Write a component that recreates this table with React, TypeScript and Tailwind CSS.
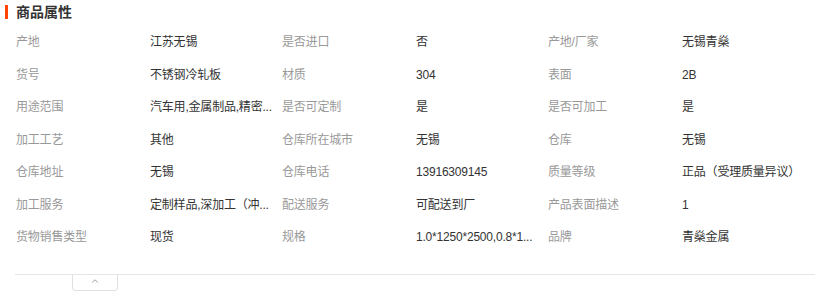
import { ChevronUp } from "lucide-react";

const attrs: [string, string][] = [
  ["产地", "江苏无锡"],
  ["是否进口", "否"],
  ["产地/厂家", "无锡青燊"],
  ["货号", "不锈钢冷轧板"],
  ["材质", "304"],
  ["表面", "2B"],
  ["用途范围", "汽车用,金属制品,精密..."],
  ["是否可定制", "是"],
  ["是否可加工", "是"],
  ["加工工艺", "其他"],
  ["仓库所在城市", "无锡"],
  ["仓库", "无锡"],
  ["仓库地址", "无锡"],
  ["仓库电话", "13916309145"],
  ["质量等级", "正品（受理质量异议）"],
  ["加工服务", "定制样品,深加工（冲..."],
  ["配送服务", "可配送到厂"],
  ["产品表面描述", "1"],
  ["货物销售类型", "现货"],
  ["规格", "1.0*1250*2500,0.8*1..."],
  ["品牌", "青燊金属"],
];

export default function App() {
  return (
    <div
      className="w-[820px] h-[291px] bg-white overflow-hidden"
      style={{ fontFamily: '"Liberation Sans", "Noto Sans CJK SC", sans-serif' }}
    >
      {/* Header */}
      <div className="flex items-center h-[22px] pt-[1px]">
        <div className="ml-[5px] w-[3px] h-[14px] bg-[#ff4400]" />
        <h2 className="ml-[8px] text-[14px] font-bold text-[#333] leading-none">商品属性</h2>
      </div>

      {/* Attribute grid */}
      <div className="mt-[4px] ml-[16px] grid grid-cols-3 w-[798px]">
        {attrs.map(([label, value]) => (
          <div key={label} className="flex items-center h-[32.5px] text-[12px] tracking-[-0.2px]">
            <span className="w-[134px] shrink-0 text-[#999] whitespace-nowrap">{label}</span>
            <span className="w-[130px] shrink-0 text-[#333] whitespace-nowrap">{value}</span>
          </div>
        ))}
      </div>

      {/* Collapse bar */}
      <div className="mt-[20px] ml-[15px] w-[800px] border-t border-[#e5e5e5]">
        <div className="ml-[57px] w-[46px] h-[16px] border border-t-0 border-[#e0e0e0] rounded-b-[4px] flex justify-center">
          <ChevronUp className="w-[10px] h-[10px] text-[#888] mt-[1px]" strokeWidth={2} />
        </div>
      </div>
    </div>
  );
}
